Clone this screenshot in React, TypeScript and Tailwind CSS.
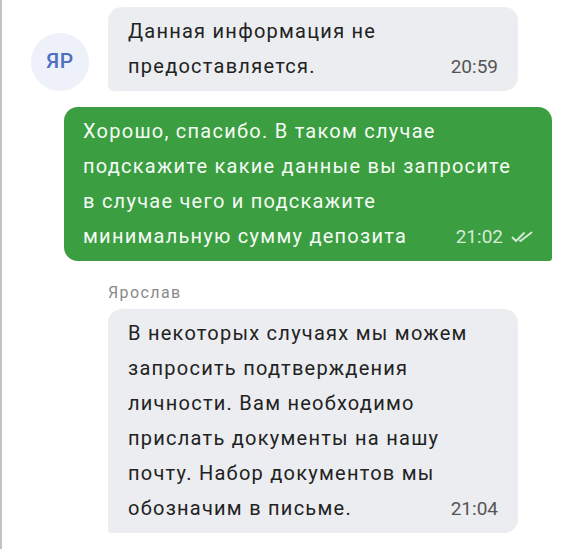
const font = { fontFamily: "Roboto, 'Noto Sans', sans-serif" };

function DoubleCheck() {
  return (
    <svg width="22" height="12" viewBox="0 0 22 12" fill="none" className="ml-2">
      <path d="M1.5 6.5 L5 10 L13 2" stroke="#d6ecd7" strokeWidth="1.8" strokeLinecap="round" strokeLinejoin="round" />
      <path d="M9 9.5 L9.5 10 L20.5 1.5" stroke="#d6ecd7" strokeWidth="1.8" strokeLinecap="round" strokeLinejoin="round" />
    </svg>
  );
}

export default function App() {
  return (
    <div
      className="w-[567px] h-[549px] bg-white border-l-2 border-[#c2c2c2] overflow-hidden"
      style={font}
    >
      <div className="flex flex-col pt-[7px]">
        {/* incoming */}
        <div className="flex items-end pl-[29px]">
          <div className="w-[58px] h-[58px] rounded-full bg-[#eef1fa] flex items-center justify-center text-[21px] tracking-[0.5px] font-medium text-[#4d6fc5]">
            ЯР
          </div>
          <div className="ml-[19px] w-[410px] bg-[#ebedf0] rounded-[14px] rounded-bl-[6px] pl-5 pr-5 py-[7px] text-[20px] leading-[35px] text-[#222]">
            <div className="tracking-[1.25px]">Данная информация не</div>
            <div className="flex justify-between">
              <span className="tracking-[1.25px]">предоставляется.</span>
              <span className="text-[19px] text-[#555]">20:59</span>
            </div>
          </div>
        </div>

        {/* outgoing */}
        <div className="mt-4 ml-[62px] w-[488px] bg-[#3b9e41] rounded-[14px] rounded-br-[3px] pl-[19px] pr-[19px] py-[7px] text-[20px] leading-[35px] text-[#f5fbf5]">
          <div className="tracking-[1.25px]">Хорошо, спасибо. В таком случае</div>
          <div className="tracking-[1.25px]">подскажите какие данные вы запросите</div>
          <div className="tracking-[1.25px]">в случае чего и подскажите</div>
          <div className="flex justify-between">
            <span className="tracking-[1.25px]">минимальную сумму депозита</span>
            <span className="flex items-center text-[19px] text-[#d6ecd7]">
              21:02
              <DoubleCheck />
            </span>
          </div>
        </div>

        <div className="mt-[22px] ml-[106px] text-[16px] leading-5 tracking-[1.4px] text-[#8a8a8a]">Ярослав</div>

        <div className="mt-[6px] ml-[106px] w-[410px] bg-[#ebedf0] rounded-[14px] rounded-bl-[3px] pl-5 pr-5 py-[7px] text-[20px] leading-[35px] text-[#222]">
          <div className="tracking-[1.25px]">В некоторых случаях мы можем</div>
          <div className="tracking-[1.25px]">запросить подтверждения</div>
          <div className="tracking-[1.25px]">личности. Вам необходимо</div>
          <div className="tracking-[1.25px]">прислать документы на нашу</div>
          <div className="tracking-[1.25px]">почту. Набор документов мы</div>
          <div className="flex justify-between">
            <span className="tracking-[1.25px]">обозначим в письме.</span>
            <span className="text-[19px] text-[#555]">21:04</span>
          </div>
        </div>
      </div>
    </div>
  );
}
